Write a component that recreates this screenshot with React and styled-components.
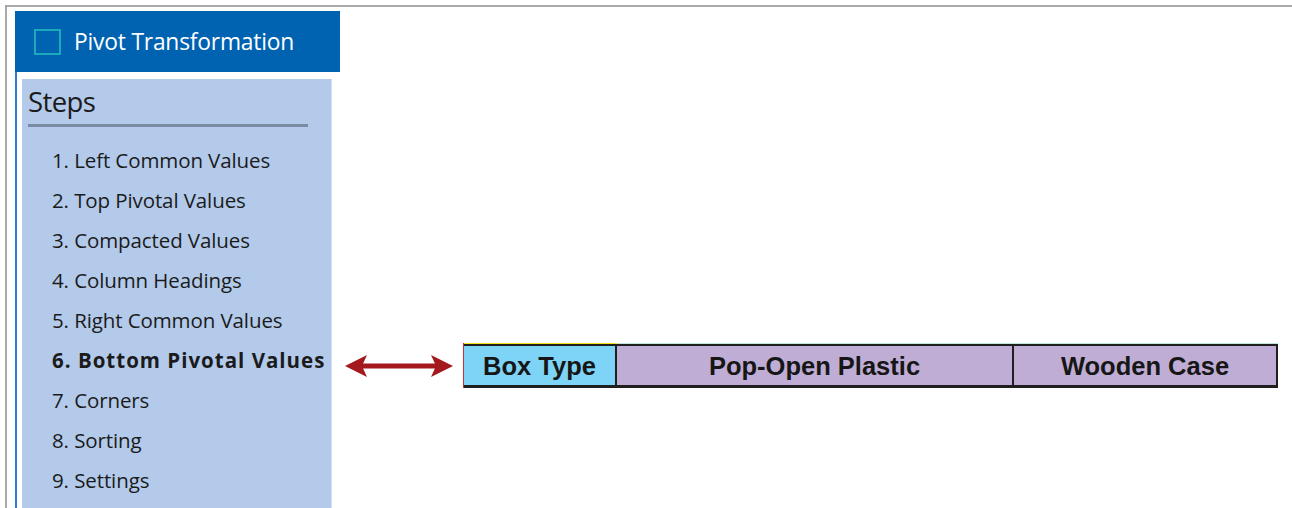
import React from 'react';
import styled, { createGlobalStyle } from 'styled-components';

const GlobalStyle = createGlobalStyle`
  html, body {
    margin: 0;
    padding: 0;
    background: #fff;
  }
`;

const Frame = styled.div`
  margin: 5px 0 0 5px;
  height: 503px;
  box-sizing: border-box;
  border-top: 2px solid #a9a9a9;
  border-left: 2px solid #a9a9a9;
  padding: 4px 0 0 8px;
  display: flex;
  overflow: hidden;
`;

const Sidebar = styled.div`
  width: 325px;
  display: flex;
  flex-direction: column;
`;

const Header = styled.div`
  height: 61px;
  background: #0063b1;
  display: flex;
  align-items: center;
  padding-left: 19px;
  gap: 13px;
  color: #fff;
  font-family: 'Open Sans', 'Noto Sans', sans-serif;
  font-size: 22.8px;
  letter-spacing: -0.2px;
`;

const CheckIcon = styled.span`
  width: 23px;
  height: 22px;
  border: 2px solid #1aaab9;
  display: inline-block;
`;

const SideBody = styled.div`
  flex: 1;
  border-left: 2px solid #2e7ccc;
  padding: 7px 0 0 5px;
  display: flex;
`;

const Panel = styled.div`
  width: 310px;
  background: #b3caea;
  border-right: 1px solid #d2e0f4;
  padding: 7px 0 0 6px;
  box-sizing: border-box;
  font-family: 'Open Sans', 'Noto Sans', sans-serif;
  color: #1b1b1b;
`;

const Title = styled.div`
  font-size: 27.5px;
  line-height: 32px;
  letter-spacing: -0.6px;
  width: 280px;
  padding-bottom: 6px;
  border-bottom: 3px solid #7a8ba2;
`;

const StepList = styled.ol`
  list-style: none;
  margin: 13px 0 0 0;
  padding: 0 0 0 24px;
`;

const Step = styled.li`
  font-size: 20.5px;
  line-height: 40px;
  letter-spacing: ${(p) => (p.$active ? '1px' : '-0.1px')};
  font-weight: ${(p) => (p.$active ? 700 : 400)};
  white-space: nowrap;
`;

const Content = styled.div`
  flex: 1;
  padding: 332px 0 0 5px;
`;

const Row = styled.div`
  display: flex;
  align-items: center;
  gap: 10px;
`;

const Arrow = styled.svg`
  width: 108px;
  height: 45px;
  flex: none;
`;

const Table = styled.div`
  display: flex;
  border-left: 1px solid #c8302e;
  height: 45px;
  box-sizing: border-box;
`;

const Cell = styled.div`
  width: ${(p) => p.$w}px;
  background: ${(p) => p.$bg};
  box-sizing: border-box;
  border-top: 2px solid #1f1f1f;
  border-bottom: 3px solid #1f1f1f;
  border-right: 2px solid #1f1f1f;
  box-shadow: 0 -1px 0 ${(p) => p.$accent};
  margin-top: 1px;
  display: flex;
  align-items: center;
  justify-content: center;
  font-family: 'Liberation Sans', Arial, sans-serif;
  font-weight: 700;
  font-size: 25.5px;
  color: #161616;
  padding-top: 2px;
`;

const steps = [
  '1. Left Common Values',
  '2. Top Pivotal Values',
  '3. Compacted Values',
  '4. Column Headings',
  '5. Right Common Values',
  '6. Bottom Pivotal Values',
  '7. Corners',
  '8. Sorting',
  '9. Settings',
];

const App = () => (
  <>
    <GlobalStyle />
    <Frame>
      <Sidebar>
        <Header>
          <CheckIcon />
          <span>Pivot Transformation</span>
        </Header>
        <SideBody>
          <Panel>
            <Title>Steps</Title>
            <StepList>
              {steps.map((s, i) => (
                <Step key={s} $active={i === 5}>{s}</Step>
              ))}
            </StepList>
          </Panel>
        </SideBody>
      </Sidebar>
      <Content>
        <Row>
          <Arrow viewBox="0 0 108 45">
            <line x1="16" y1="23" x2="92" y2="23" stroke="#a3191d" strokeWidth="5" />
            <polygon points="0,23 22,12 17,23 22,34" fill="#a3191d" />
            <polygon points="108,23 86,12 91,23 86,34" fill="#a3191d" />
          </Arrow>
          <Table>
            <Cell $w={153} $bg="#7dd4f6" $accent="#f2e21a">Box Type</Cell>
            <Cell $w={397} $bg="#bfadd5" $accent="#bfe6d8">Pop-Open Plastic</Cell>
            <Cell $w={264} $bg="#bfadd5" $accent="#bfe6d8">Wooden Case</Cell>
          </Table>
        </Row>
      </Content>
    </Frame>
  </>
);

export default App;
